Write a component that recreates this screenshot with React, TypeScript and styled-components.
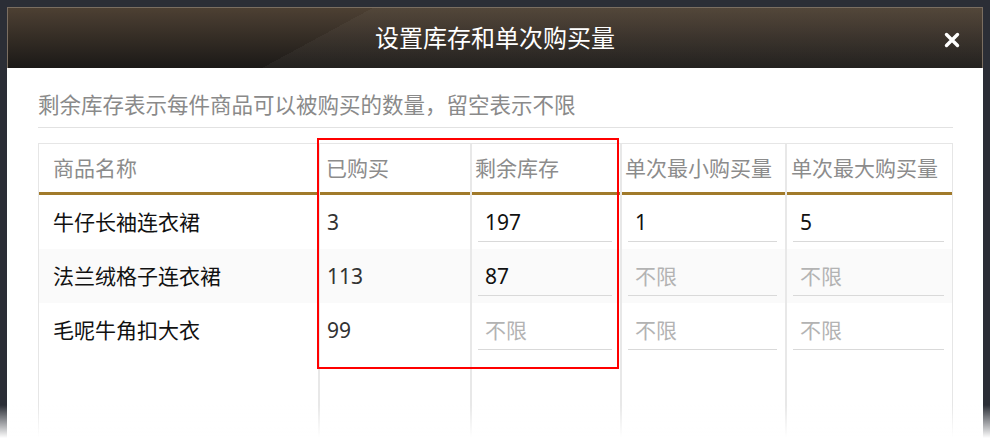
import React from "react";
import styled, { createGlobalStyle } from "styled-components";

interface Item {
  name: string;
  bought: number;
  stock: string;
  min: string;
  max: string;
}

const items: Item[] = [
  { name: "牛仔长袖连衣裙", bought: 3, stock: "197", min: "1", max: "5" },
  { name: "法兰绒格子连衣裙", bought: 113, stock: "87", min: "", max: "" },
  { name: "毛呢牛角扣大衣", bought: 99, stock: "", min: "", max: "" },
];

const columns = [
  { title: "商品名称", pad: 14 },
  { title: "已购买", pad: 6 },
  { title: "剩余库存", pad: 3 },
  { title: "单次最小购买量", pad: 3 },
  { title: "单次最大购买量", pad: 4 },
];

const GlobalStyle = createGlobalStyle`
  html, body {
    margin: 0;
    padding: 0;
  }
  body {
    background: #2b2e36;
    font-family: "Noto Sans", "Noto Sans CJK SC", sans-serif;
    overflow: hidden;
  }
`;

const Page = styled.div`
  height: 438px;
  padding-top: 7px;
  box-sizing: border-box;
  overflow: hidden;
`;

const Dialog = styled.div`
  margin-left: 7px;
  width: 976px;
  height: 100%;
  background: #fff;
  display: flex;
  flex-direction: column;
`;

const Header = styled.div`
  height: 61px;
  flex-shrink: 0;
  box-sizing: border-box;
  border: 1px solid #7a6e61;
  border-bottom: none;
  background:
    linear-gradient(151.5deg, rgba(255, 255, 255, 0) 174px, rgba(255, 255, 255, 0.035) 174px),
    linear-gradient(to bottom, #4d4033, #1b1917);
  display: grid;
  grid-template-columns: 1fr auto 1fr;
  align-items: center;
`;

const Title = styled.h1`
  margin: 0;
  grid-column: 2;
  font-size: 24px;
  font-weight: 400;
  line-height: 1;
  color: #fff;
  letter-spacing: 0;
`;

const CloseButton = styled.button`
  grid-column: 3;
  justify-self: end;
  margin: 3px 22px 0 0;
  padding: 0;
  width: 17px;
  height: 17px;
  border: none;
  background: none;
  cursor: pointer;
  display: flex;
  align-items: center;
  justify-content: center;
`;

const Body = styled.div`
  flex: 1;
  min-height: 0;
  padding: 0 30px 0 31px;
  display: flex;
  flex-direction: column;
`;

const Hint = styled.p`
  margin: 0;
  padding: 22px 0 7px;
  font-size: 21.5px;
  line-height: 30px;
  color: #8a8a8a;
  border-bottom: 1px solid #e2e2e2;
`;

const TableWrap = styled.div`
  position: relative;
  margin-top: 15px;
  flex: 1;
  min-height: 0;
`;

const Grid = styled.div`
  height: 100%;
  box-sizing: border-box;
  display: grid;
  grid-template-columns: 279px 150px 148px 163px 165px;
  grid-template-rows: 51px 54px 54px 54px 1fr;
  column-gap: 2px;
  background: #e8e8e8;
  border: 1px solid #e6e6e6;
  border-bottom: none;
`;

const HeadCell = styled.div<{ $pad: number }>`
  box-sizing: border-box;
  background: #fff;
  border-bottom: 3px solid #a17a2a;
  padding-left: ${(p) => p.$pad}px;
  display: flex;
  align-items: center;
  font-size: 21px;
  line-height: 1;
  color: #8c8c8c;
  white-space: nowrap;
`;

const Cell = styled.div<{ $striped?: boolean; $pad?: number; $tone?: string }>`
  box-sizing: border-box;
  background: ${(p) => (p.$striped ? "#fafafa" : "#fff")};
  padding-left: ${(p) => p.$pad ?? 0}px;
  display: flex;
  align-items: center;
  font-size: 21px;
  line-height: 1;
  color: ${(p) => p.$tone ?? "#111"};
  white-space: nowrap;
`;

const InputCell = styled.div<{ $striped?: boolean }>`
  box-sizing: border-box;
  background: ${(p) => (p.$striped ? "#fafafa" : "#fff")};
  padding: 7px 8px 0 6px;
`;

const NumberInput = styled.input`
  display: block;
  width: 100%;
  height: 40px;
  box-sizing: border-box;
  border: none;
  border-bottom: 1px solid #d9d9d9;
  background: transparent;
  padding: 0 0 0 7px;
  font-family: inherit;
  font-size: 21px;
  color: #111;
  outline: none;

  &::placeholder {
    color: #b3b3b3;
  }
`;

const Highlight = styled.div`
  position: absolute;
  left: 279px;
  top: -5px;
  width: 302px;
  height: 231px;
  box-sizing: border-box;
  border: 2px solid #f00;
  pointer-events: none;
`;

const BottomFade = styled.div`
  position: fixed;
  left: 0;
  right: 0;
  bottom: 0;
  height: 33px;
  background: linear-gradient(to bottom, rgba(255, 255, 255, 0), #fff);
  pointer-events: none;
`;

const CloseIcon = () => (
  <svg width="16" height="16" viewBox="0 0 16 16">
    <path
      d="M2.5 2.5 L13.5 13.5 M13.5 2.5 L2.5 13.5"
      stroke="#fff"
      strokeWidth="3.4"
      strokeLinecap="round"
    />
  </svg>
);

export default function App() {
  return (
    <>
      <GlobalStyle />
      <Page>
        <Dialog>
          <Header>
            <Title>设置库存和单次购买量</Title>
            <CloseButton aria-label="关闭">
              <CloseIcon />
            </CloseButton>
          </Header>
          <Body>
            <Hint>剩余库存表示每件商品可以被购买的数量，留空表示不限</Hint>
            <TableWrap>
              <Grid>
                {columns.map((c) => (
                  <HeadCell key={c.title} $pad={c.pad}>
                    {c.title}
                  </HeadCell>
                ))}
                {items.map((item, i) => {
                  const striped = i % 2 === 1;
                  return (
                    <React.Fragment key={item.name}>
                      <Cell $striped={striped} $pad={14}>
                        {item.name}
                      </Cell>
                      <Cell $striped={striped} $pad={7} $tone="#333">
                        {item.bought}
                      </Cell>
                      <InputCell $striped={striped}>
                        <NumberInput defaultValue={item.stock} placeholder="不限" />
                      </InputCell>
                      <InputCell $striped={striped}>
                        <NumberInput defaultValue={item.min} placeholder="不限" />
                      </InputCell>
                      <InputCell $striped={striped}>
                        <NumberInput defaultValue={item.max} placeholder="不限" />
                      </InputCell>
                    </React.Fragment>
                  );
                })}
                {columns.map((c) => (
                  <Cell key={`fill-${c.title}`} />
                ))}
              </Grid>
              <Highlight />
            </TableWrap>
          </Body>
        </Dialog>
      </Page>
      <BottomFade />
    </>
  );
}
